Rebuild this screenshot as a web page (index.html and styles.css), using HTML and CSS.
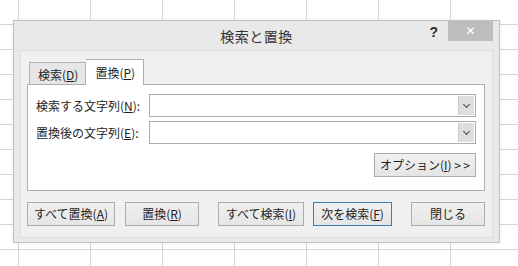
FILE: index.html
```html
<!DOCTYPE html>
<html lang="ja">
<head>
    <meta charset="UTF-8">
    <title>検索と置換</title>
    <link rel="stylesheet" href="styles.css">
</head>
<body>
    <div class="dialog">
        <div class="title-bar">
            <div></div>
            <div class="title">検索と置換</div>
            <div class="title-controls">
                <span class="help">?</span>
                <span class="close">&#x2715;</span>
            </div>
        </div>

        <div class="client">
            <div class="tabs">
                <div class="tab">検索(<u>D</u>)</div>
                <div class="tab active">置換(<u>P</u>)</div>
            </div>
            <div class="panel">
                <div class="field-row">
                    <label class="field-label">検索する文字列(<u>N</u>):</label>
                    <div class="combo"><span class="combo-arrow"></span></div>
                </div>
                <div class="field-row">
                    <label class="field-label">置換後の文字列(<u>E</u>):</label>
                    <div class="combo"><span class="combo-arrow"></span></div>
                </div>
                <div class="options-row">
                    <button class="btn btn-options">オプション(<u>I</u>) &gt;&thinsp;&gt;</button>
                </div>
            </div>
            <div class="button-row">
                <button class="btn btn-replace-all">すべて置換(<u>A</u>)</button>
                <button class="btn btn-replace">置換(<u>R</u>)</button>
                <button class="btn btn-find-all">すべて検索(<u>I</u>)</button>
                <button class="btn btn-find-next">次を検索(<u>F</u>)</button>
                <button class="btn btn-close">閉じる</button>
            </div>
        </div>
    </div>
</body>
</html>
```

FILE: styles.css
```css
body {
    margin: 0;
    padding: 20px 0 0 13px;
    height: 266px;
    box-sizing: border-box;
    font-family: "Noto Sans CJK JP", "Noto Sans", sans-serif;
    font-size: 12px;
    color: #1e1e1e;
    background-color: #fff;
    /* excel grid behind the dialog */
    background-image:
        linear-gradient(to right, #d6d6d6 1px, transparent 1px),
        linear-gradient(to bottom, #d6d6d6 1px, transparent 1px);
    background-size: 72px 25px;
    background-position: 18px 24px;
    overflow: hidden;
}
.dialog {
    width: 487px;
    height: 223px;
    box-sizing: border-box;
    border: 1px solid #c2c2c2;
    background-color: #e9e9e9;
    padding: 0 6px 4px;
    display: flex;
    flex-direction: column;
    box-shadow: 0 0 3px rgba(0, 0, 0, 0.08);
}
.title-bar {
    height: 29px;
    display: grid;
    grid-template-columns: 1fr auto 1fr;
    flex-shrink: 0;
}
.title {
    font-size: 14px;
    color: #333;
    padding-top: 5px;
    letter-spacing: 0.5px;
}
.title-controls {
    display: flex;
    justify-content: flex-end;
    align-items: flex-start;
}
.help {
    font-family: "Liberation Sans", sans-serif;
    font-weight: bold;
    font-size: 14px;
    color: #2b2b2b;
    margin: 3px 10px 0 0;
}
.close {
    width: 45px;
    height: 20px;
    background-color: #bdbdbd;
    color: #fff;
    font-family: "DejaVu Sans", sans-serif;
    font-size: 12px;
    font-weight: bold;
    display: flex;
    align-items: center;
    justify-content: center;
}
.client {
    flex: 1;
    border: 1px solid #dcdcdc;
    background-color: #f0f0f0;
    padding: 8px 7px 0 6px;
    display: flex;
    flex-direction: column;
}
.tabs {
    display: flex;
    align-items: flex-end;
    height: 25px;
    padding-left: 2px;
}
.tab {
    height: 22px;
    box-sizing: border-box;
    border: 1px solid #b5b5b5;
    border-bottom: none;
    background-color: #e6e6e6;
    padding: 3px 7px 0 8px;
    line-height: 18px;
}
.tab.active {
    height: 26px;
    margin-bottom: -1px;
    background-color: #fff;
    border-color: #adadad;
    padding: 4px 8px 0 9px;
    position: relative;
    z-index: 1;
    border-left: none;
}
.panel {
    height: 107px;
    box-sizing: border-box;
    border: 1px solid #adadad;
    background-color: #fff;
    padding: 9px 8px 0 8px;
    display: flex;
    flex-direction: column;
    gap: 4px;
}
.field-row {
    display: flex;
    align-items: center;
}
.field-label {
    width: 113px;
    flex-shrink: 0;
}
.combo {
    flex: 1;
    height: 23px;
    box-sizing: border-box;
    border: 1px solid #ababab;
    background-color: #fff;
    display: flex;
    justify-content: flex-end;
    padding: 1px;
}
.combo-arrow {
    width: 15px;
    background-color: #dedede;
    border-left: 1px solid #cacaca;
    position: relative;
}
.combo-arrow::after {
    content: "";
    position: absolute;
    left: 5px;
    top: 6px;
    width: 4px;
    height: 4px;
    border-right: 1.5px solid #4a4a4a;
    border-bottom: 1.5px solid #4a4a4a;
    transform: rotate(45deg);
}
.options-row {
    display: flex;
    justify-content: flex-end;
    margin-top: 5px;
}
.btn {
    font-family: inherit;
    font-size: 12px;
    color: #1e1e1e;
    height: 24px;
    box-sizing: border-box;
    border: 1px solid #acacac;
    background: linear-gradient(#f0f0f0, #e5e5e5);
    padding: 0;
    line-height: 20px;
}
.btn-options {
    width: 102px;
}
.button-row {
    display: flex;
    margin-top: 11px;
}
.btn-replace-all {
    width: 88px;
}
.btn-replace {
    width: 74px;
    margin-left: 10px;
}
.btn-find-all {
    width: 86px;
    margin-left: 19px;
}
.btn-find-next {
    width: 79px;
    margin-left: 9px;
    border-color: #3c7fb1;
}
.btn-close {
    width: 74px;
    margin-left: 19px;
}
```
